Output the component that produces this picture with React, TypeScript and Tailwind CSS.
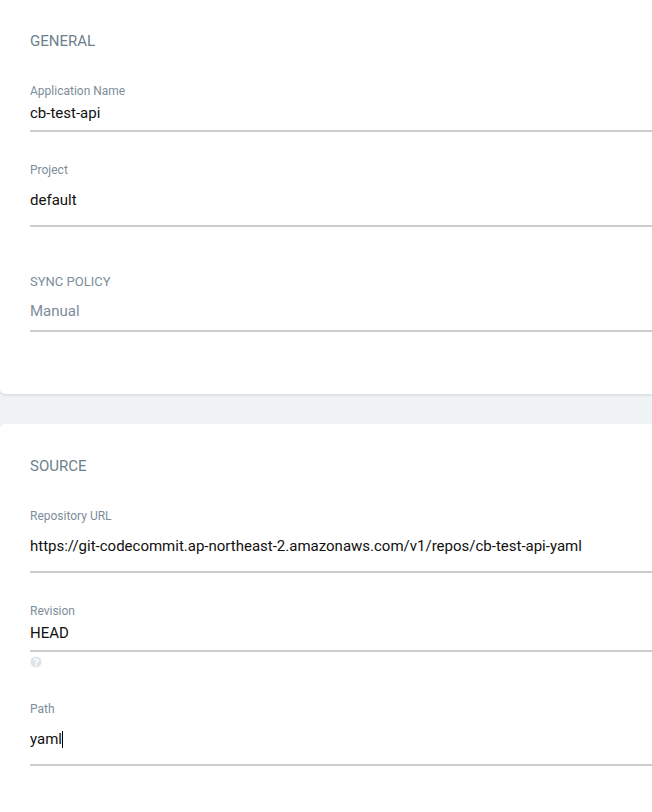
// Application create form: general + source panels.
const labelClass = "block h-[14px] text-xs leading-[14px] text-[#7c8d9a]";
const valueClass = "text-[15px] leading-[20px]";

function Field({
  label,
  value,
  className,
  valueClassName,
  labelClassName = labelClass,
  caret,
  muted,
}: {
  label: string;
  value: string;
  className: string;
  valueClassName: string;
  labelClassName?: string;
  caret?: boolean;
  muted?: boolean;
}) {
  return (
    <div className={className}>
      <label className={labelClassName}>{label}</label>
      <div className={`${valueClassName} ${valueClass} flex items-center ${muted ? "text-[#7c8d9a]" : "text-[#111]"}`}>
        {value}
        {caret && <span className="inline-block h-[17px] w-px bg-black" />}
      </div>
    </div>
  );
}

function Rule({ className }: { className: string }) {
  return <div className={`h-0.5 bg-[#cccccc] ${className}`} />;
}

export default function App() {
  return (
    <div className="h-[812px] w-[652px] overflow-hidden bg-[#eff3f6] font-['Roboto',sans-serif]">
      <section className="h-[394px] rounded-bl-[5px] bg-white pl-[30px] shadow-[0_1px_3px_rgba(0,0,0,0.13)]">
        <h2 className="pt-[33px] text-[15px] leading-4 text-[#6d7f8b]">GENERAL</h2>

        <Field label="Application Name" value="cb-test-api" className="mt-[35px]" valueClassName="mt-[5px]" />
        <Rule className="mt-[7px]" />

        <Field label="Project" value="default" className="mt-[31px]" valueClassName="mt-[13px]" />
        <Rule className="mt-[15px]" />

        <Field
          label="SYNC POLICY"
          labelClassName="block h-[14px] text-[13px] leading-[14px] text-[#7c8d9a]"
          value="Manual"
          className="mt-[48px]"
          valueClassName="mt-3"
        muted
        />
        <Rule className="mt-[9px]" />
      </section>

      <section className="mt-[30px] h-[388px] rounded-tl-[5px] bg-white pl-[30px]">
        <h2 className="pt-[34px] text-[15px] leading-4 text-[#6d7f8b]">SOURCE</h2>

        <Field
          label="Repository URL"
          value="https://git-codecommit.ap-northeast-2.amazonaws.com/v1/repos/cb-test-api-yaml"
          className="mt-[35px]"
          valueClassName="mt-[13px]"
        />
        <Rule className="mt-[15px]" />

        <Field label="Revision" value="HEAD" className="mt-[31px]" valueClassName="mt-[5px]" />
        <Rule className="mt-[7px]" />
        <svg viewBox="0 0 24 24" className="mt-1 h-3 w-3" aria-hidden="true">
          <path
            fill="#dfe6eb"
            fillRule="evenodd"
            d="M12 1a11 11 0 1 0 0 22 11 11 0 0 0 0-22Zm-1.5 16h3v3h-3v-3Zm1.6-12c2.9 0 4.9 1.7 4.9 4.1 0 1.8-1 2.8-2.3 3.7-1 .7-1.3 1.1-1.3 2.2h-3c0-2 .7-3 2.2-4 .9-.6 1.4-1.1 1.4-1.9 0-1-.8-1.6-1.9-1.6-1.2 0-2 .7-2.1 2H7.5C7.6 6.7 9.400 5 12.100 5Z"
          />
        </svg>

        <Field label="Path" value="yaml" className="mt-[34px]" valueClassName="mt-[13px]" caret />
        <Rule className="mt-[15px]" />
      </section>
    </div>
  );
}
